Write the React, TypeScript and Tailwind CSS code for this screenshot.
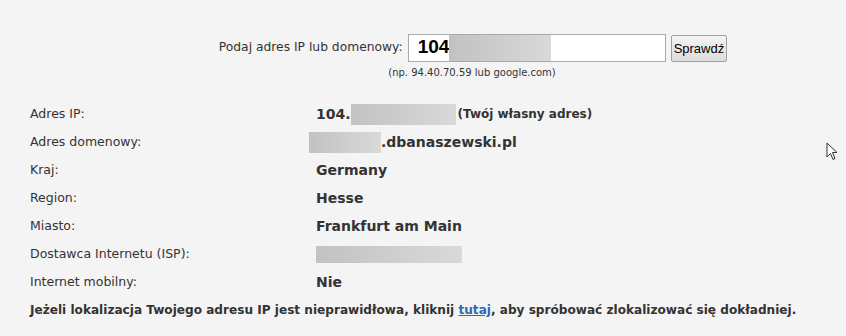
import React from 'react';

const font = { fontFamily: '"DejaVu Sans", Verdana, sans-serif' };

const Blur: React.FC<{ className?: string }> = ({ className = '' }) => (
  <span className={`inline-block bg-gradient-to-r from-[#c2c2c2] to-[#d9d9d9] ${className}`} />
);

interface RowProps {
  label: string;
  children: React.ReactNode;
}

const Row: React.FC<RowProps> = ({ label, children }) => (
  <div className="flex items-center h-[28px]">
    <div className="w-[286px] text-[12.5px] text-[#333]">{label}</div>
    <div className="flex items-center text-[14px] font-bold text-[#333]">{children}</div>
  </div>
);

export default function App() {
  return (
    <div className="relative w-[846px] h-[336px] bg-[#f4f4f4] overflow-hidden" style={font}>
      {/* Form */}
      <div className="flex flex-col items-center pt-[33px] pl-[100px]">
        <div className="flex items-center">
          <label className="text-[12.3px] text-[#333] mr-[5px]">Podaj adres IP lub domenowy:</label>
          <div className="flex items-center w-[258px] h-[28px] bg-white border border-[#a9a9a9] pl-[9px]">
            <span className="text-[19px] font-bold text-black" style={{ fontFamily: '"Liberation Sans", Arial, sans-serif' }}>104</span>
            <Blur className="w-[102px] h-[26px]" />
          </div>
          <button
            className="ml-[5px] mt-[2px] h-[27px] px-[2px] text-[13px] text-black border border-[#a0a0a0] rounded-[2px] bg-gradient-to-b from-[#f4f4f4] to-[#dcdcdc]"
            style={{ fontFamily: '"Liberation Sans", Arial, sans-serif' }}
          >
            Sprawdź
          </button>
        </div>
        <div className="text-[10px] text-[#333] mt-[3px] mr-[2px]">(np. 94.40.70.59 lub google.com)</div>
      </div>

      {/* Details */}
      <div className="pl-[30px] pt-[20px]">
        <Row label="Adres IP:">
          <span>104.</span>
          <Blur className="w-[105px] h-[21px]" />
          <span className="text-[12px] ml-[2px]">(Twój własny adres)</span>
        </Row>
        <Row label="Adres domenowy:">
          <Blur className="w-[72px] h-[21px] -ml-[7px]" />
          <span>.dbanaszewski.pl</span>
        </Row>
        <Row label="Kraj:">Germany</Row>
        <Row label="Region:">Hesse</Row>
        <Row label="Miasto:">Frankfurt am Main</Row>
        <Row label="Dostawca Internetu (ISP):">
          <Blur className="w-[146px] h-[17px]" />
        </Row>
        <Row label="Internet mobilny:">Nie</Row>
        <p className="text-[12.1px] font-bold text-[#333] mt-[5px]">
          Jeżeli lokalizacja Twojego adresu IP jest nieprawidłowa, kliknij{' '}
          <a href="#" className="text-[#2a6ab5] underline">tutaj</a>, aby spróbować zlokalizować się dokładniej.
        </p>
      </div>

      {/* Mouse cursor */}
      <svg className="absolute left-[826px] top-[142px]" width="13" height="20" viewBox="0 0 13 20">
        <path d="M1 1 L1 15 L4.5 11.5 L7 17.5 L9 16.5 L6.5 10.5 L11 10.5 Z" fill="white" stroke="#333" strokeWidth="1" strokeLinejoin="round" />
      </svg>
    </div>
  );
}
